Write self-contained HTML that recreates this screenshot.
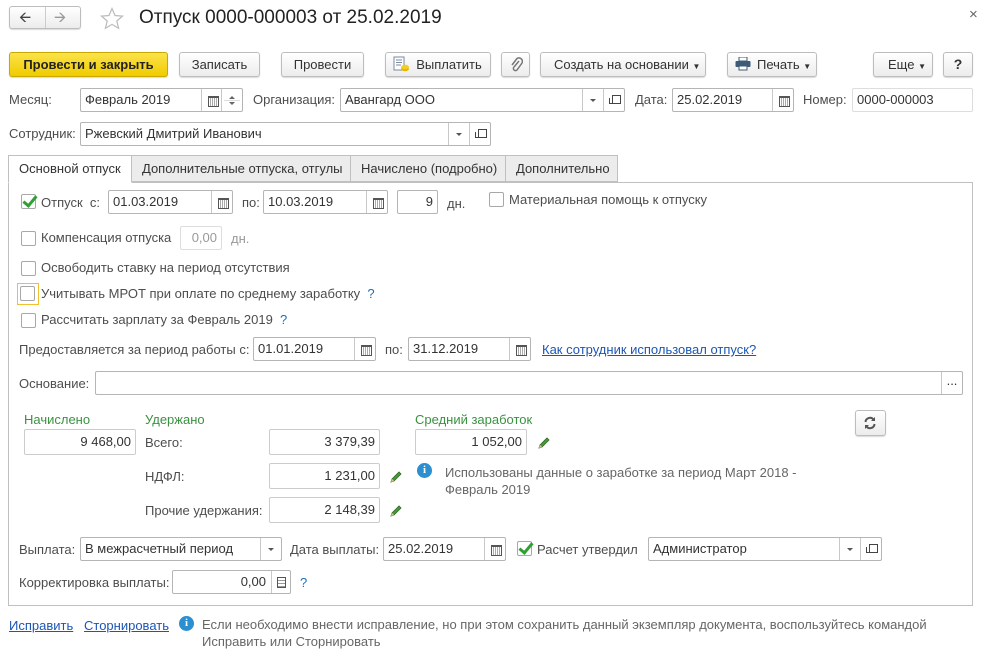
<!DOCTYPE html>
<html><head><meta charset="utf-8">
<style>
*{box-sizing:border-box;margin:0;padding:0}
body{width:982px;height:651px;background:#fff;font-family:"Liberation Sans",Arial,sans-serif;font-size:13px;color:#333;position:relative;overflow:hidden}
.a{position:absolute;white-space:nowrap}
.lbl{position:absolute;white-space:nowrap;color:#4d4d4d;line-height:16px}
.f{position:absolute;border:1px solid #b5b5b5;border-radius:2px;background:#fff;height:24px;line-height:22px;padding:0 4px;color:#333;white-space:nowrap;overflow:hidden}
.r{text-align:right}
.btn{position:absolute;height:25px;border:1px solid #bdbdbd;border-radius:3px;background:linear-gradient(#fff,#ececec);box-shadow:0 1px 1px rgba(0,0,0,.15);line-height:23px;text-align:center;color:#333;white-space:nowrap}
.sb{position:absolute;top:0;bottom:0;border-left:1px solid #c8c8c8;width:21px}
.dd:after{content:"";position:absolute;left:7px;top:10px;border:3px solid transparent;border-top:3px solid #555}
.op:before{content:"";position:absolute;left:8px;top:6px;width:7px;height:7px;border:1px solid #444}
.op:after{content:"";position:absolute;left:5px;top:9px;width:4px;height:5px;border-left:1px solid #444;border-bottom:1px solid #444}
.cal:before{content:"";position:absolute;left:6px;top:7px;width:9px;height:8px;border:1px solid #555;border-top:2px solid #555;background:repeating-linear-gradient(90deg,#fff 0 1px,#aaa 1px 2px)}
.cb{position:absolute;width:15px;height:15px;border:1px solid #a8a8a8;border-radius:2px;background:#fff}
.chk:after{content:"";position:absolute;left:4px;top:-2px;width:5px;height:11px;border-right:3px solid #2fa033;border-bottom:3px solid #2fa033;transform:rotate(40deg)}
.g{position:absolute;color:#3a9240;white-space:nowrap}
.lnk{position:absolute;color:#1c56b3;text-decoration:underline;white-space:nowrap}
.info{position:absolute;width:15px;height:15px;border-radius:50%;background:#2b8fd0;color:#fff;font-weight:bold;font-size:11px;line-height:15px;text-align:center;font-family:"Liberation Serif",serif}
.pen{position:absolute;width:14px;height:14px}
.tab{position:absolute;top:155px;height:27px;border:1px solid #c0c0c0;background:#ececec;line-height:26px;padding-left:10px;color:#333;white-space:nowrap}
</style></head><body>

<div class="btn" style="left:9px;top:6px;width:72px;height:23px;line-height:21px"></div>
<div class="a" style="left:45px;top:7px;width:1px;height:21px;background:#ccc"></div>
<div class="a" style="left:19px;top:7px;font-size:15px;color:#444">&#129128;</div>
<div class="a" style="left:54px;top:7px;font-size:15px;color:#999">&#129130;</div>
<svg class="a" style="left:100px;top:7px" width="24" height="23" viewBox="0 0 24 23"><path d="M12 1.5l3 7 7.5.6-5.7 4.9 1.8 7.3L12 17.4 5.4 21.3l1.8-7.3L1.5 9.1 9 8.5z" fill="none" stroke="#bbb" stroke-width="1.2"/></svg>
<div class="a" style="left:139px;top:7px;font-size:19px;color:#222">Отпуск 0000-000003 от 25.02.2019</div>
<div class="a" style="left:969px;top:6px;font-size:15px;color:#666">×</div>

<div class="btn" style="left:9px;top:52px;width:159px;background:linear-gradient(#fbe34a,#f0cc00);border-color:#c9a800;font-weight:bold;color:#222">Провести и закрыть</div>
<div class="btn" style="left:179px;top:52px;width:81px">Записать</div>
<div class="btn" style="left:281px;top:52px;width:83px">Провести</div>
<div class="btn" style="left:385px;top:52px;width:106px;padding-left:22px">Выплатить</div>
<svg class="a" style="left:393px;top:56px" width="16" height="17"><rect x="1" y="1" width="10" height="13" fill="#fff" stroke="#7a8aa0"/><path d="M3 4h6M3 6.5h6M3 9h5" stroke="#7a8aa0"/><ellipse cx="12" cy="13" rx="4" ry="2.2" fill="#e8b400"/><ellipse cx="12" cy="11" rx="4" ry="2.2" fill="#f5cc20"/></svg>
<div class="btn" style="left:501px;top:52px;width:29px"></div>
<svg class="a" style="left:509px;top:56px" width="14" height="17"><path d="M10 5L5 11a2 2 0 0 0 3 3l5-7a3.5 3.5 0 0 0-5-4.5L3 9" fill="none" stroke="#777" stroke-width="1.5"/></svg>
<div class="btn" style="left:540px;top:52px;width:166px;text-align:left;padding-left:13px">Создать на основании <span style="font-size:8px">▼</span></div>
<div class="btn" style="left:727px;top:52px;width:90px;text-align:left;padding-left:29px">Печать <span style="font-size:8px">▼</span></div>
<svg class="a" style="left:735px;top:57px" width="16" height="14"><rect x="4" y="0" width="8" height="4" fill="#fff" stroke="#3d5a78"/><rect x="0.5" y="4" width="15" height="6" rx="1" fill="#3d5a78"/><rect x="4" y="9" width="8" height="4" fill="#fff" stroke="#3d5a78"/></svg>
<div class="btn" style="left:873px;top:52px;width:60px;text-align:left;padding-left:14px">Еще <span style="font-size:8px">▼</span></div>
<div class="btn" style="left:943px;top:52px;width:30px;font-weight:bold;font-size:14px">?</div>

<div class="lbl" style="left:9px;top:92px">Месяц:</div>
<div class="f" style="left:80px;top:88px;width:163px">Февраль 2019<div class="sb cal" style="right:20px"></div><div class="sb" style="right:0;width:21px"><div style="position:absolute;left:7px;top:4px;border:3px solid transparent;border-bottom:3px solid #666"></div><div style="position:absolute;left:2px;right:2px;top:11px;border-top:1px solid #ddd"></div><div style="position:absolute;left:7px;top:13px;border:3px solid transparent;border-top:3px solid #666"></div></div></div>
<div class="lbl" style="left:253px;top:92px">Организация:</div>
<div class="f" style="left:340px;top:88px;width:285px">Авангард ООО<div class="sb dd" style="right:21px"></div><div class="sb op" style="right:0"></div></div>
<div class="lbl" style="left:635px;top:92px">Дата:</div>
<div class="f" style="left:672px;top:88px;width:122px">25.02.2019<div class="sb cal" style="right:0"></div></div>
<div class="lbl" style="left:803px;top:92px">Номер:</div>
<div class="f" style="left:852px;top:88px;width:121px;border-color:#ddd">0000-000003</div>

<div class="lbl" style="left:9px;top:126px">Сотрудник:</div>
<div class="f" style="left:80px;top:122px;width:411px">Ржевский Дмитрий Иванович<div class="sb dd" style="right:21px"></div><div class="sb op" style="right:0"></div></div>

<div class="a" style="left:8px;top:182px;width:965px;height:424px;border:1px solid #c0c0c0"></div>
<div class="tab" style="left:131px;width:220px">Дополнительные отпуска, отгулы</div>
<div class="tab" style="left:350px;width:156px">Начислено (подробно)</div>
<div class="tab" style="left:505px;width:113px">Дополнительно</div>
<div class="tab" style="left:8px;width:124px;background:#fff;border-bottom:1px solid #fff;height:28px">Основной отпуск</div>

<div class="cb chk" style="left:21px;top:194px"></div>
<div class="lbl" style="left:41px;top:195px">Отпуск&nbsp; с:</div>
<div class="f" style="left:108px;top:190px;width:125px">01.03.2019<div class="sb cal" style="right:0"></div></div>
<div class="lbl" style="left:242px;top:195px">по:</div>
<div class="f" style="left:263px;top:190px;width:125px">10.03.2019<div class="sb cal" style="right:0"></div></div>
<div class="f r" style="left:397px;top:190px;width:41px">9</div>
<div class="lbl" style="left:447px;top:196px">дн.</div>
<div class="cb" style="left:489px;top:192px"></div>
<div class="lbl" style="left:509px;top:192px">Материальная помощь к отпуску</div>

<div class="cb" style="left:21px;top:231px"></div>
<div class="lbl" style="left:41px;top:230px">Компенсация отпуска</div>
<div class="f r" style="left:180px;top:226px;width:42px;border-color:#ddd;color:#999">0,00</div>
<div class="lbl" style="left:231px;top:231px;color:#999">дн.</div>

<div class="cb" style="left:21px;top:261px"></div>
<div class="lbl" style="left:41px;top:260px">Освободить ставку на период отсутствия</div>
<div class="a" style="left:17px;top:283px;width:22px;height:22px;border:1px solid #f0c030"></div>
<div class="cb" style="left:20px;top:286px"></div>
<div class="lbl" style="left:41px;top:286px">Учитывать МРОТ при оплате по среднему заработку <span style="color:#1e6fb8">&nbsp;?</span></div>
<div class="cb" style="left:21px;top:313px"></div>
<div class="lbl" style="left:41px;top:312px">Рассчитать зарплату за Февраль 2019 <span style="color:#1e6fb8">&nbsp;?</span></div>

<div class="lbl" style="left:19px;top:342px">Предоставляется за период работы с:</div>
<div class="f" style="left:253px;top:337px;width:123px">01.01.2019<div class="sb cal" style="right:0"></div></div>
<div class="lbl" style="left:385px;top:342px">по:</div>
<div class="f" style="left:408px;top:337px;width:123px">31.12.2019<div class="sb cal" style="right:0"></div></div>
<div class="lnk" style="left:542px;top:342px">Как сотрудник использовал отпуск?</div>

<div class="lbl" style="left:19px;top:376px">Основание:</div>
<div class="f" style="left:95px;top:371px;width:868px"><div class="sb" style="right:0;text-align:center;line-height:18px">...</div></div>

<div class="g" style="left:24px;top:412px">Начислено</div>
<div class="f r" style="left:24px;top:429px;width:112px;height:26px;line-height:24px;border-color:#ccc">9 468,00</div>
<div class="g" style="left:145px;top:412px">Удержано</div>
<div class="lbl" style="left:145px;top:435px">Всего:</div>
<div class="f r" style="left:269px;top:429px;width:111px;height:26px;line-height:24px;border-color:#ccc">3 379,39</div>
<div class="lbl" style="left:145px;top:469px">НДФЛ:</div>
<div class="f r" style="left:269px;top:463px;width:111px;height:26px;line-height:24px;border-color:#ccc">1 231,00</div>
<div class="lbl" style="left:145px;top:503px">Прочие удержания:</div>
<div class="f r" style="left:269px;top:497px;width:111px;height:26px;line-height:24px;border-color:#ccc">2 148,39</div>
<div class="g" style="left:415px;top:412px">Средний заработок</div>
<div class="f r" style="left:415px;top:429px;width:112px;height:26px;line-height:24px;border-color:#ccc">1 052,00</div>
<svg class="pen" style="left:537px;top:436px" viewBox="0 0 14 14"><path d="M2 12l1-3 7-7 2 2-7 7z" fill="#4a9a3a" stroke="#2c6a22" stroke-width=".8"/><path d="M2 12l1-3 2 2z" fill="#e8c890"/></svg>
<svg class="pen" style="left:389px;top:470px" viewBox="0 0 14 14"><path d="M2 12l1-3 7-7 2 2-7 7z" fill="#4a9a3a" stroke="#2c6a22" stroke-width=".8"/><path d="M2 12l1-3 2 2z" fill="#e8c890"/></svg>
<svg class="pen" style="left:389px;top:504px" viewBox="0 0 14 14"><path d="M2 12l1-3 7-7 2 2-7 7z" fill="#4a9a3a" stroke="#2c6a22" stroke-width=".8"/><path d="M2 12l1-3 2 2z" fill="#e8c890"/></svg>
<div class="info" style="left:417px;top:463px">i</div>
<div class="lbl" style="left:445px;top:464px;color:#666;line-height:17px">Использованы данные о заработке за период Март 2018 -<br>Февраль 2019</div>
<div class="btn" style="left:855px;top:410px;width:31px;height:26px"></div>
<svg class="a" style="left:863px;top:416px" width="14" height="14" viewBox="0 0 14 14"><path d="M2.5 6A4.5 4.5 0 0 1 10.5 3.5M11.5 8A4.5 4.5 0 0 1 3.5 10.5" fill="none" stroke="#555" stroke-width="2"/><path d="M12 1v4H8z M2 13V9h4z" fill="#555"/></svg>

<div class="lbl" style="left:19px;top:542px">Выплата:</div>
<div class="f" style="left:80px;top:537px;width:202px">В межрасчетный период<div class="sb dd" style="right:0"></div></div>
<div class="lbl" style="left:290px;top:542px">Дата выплаты:</div>
<div class="f" style="left:383px;top:537px;width:123px">25.02.2019<div class="sb cal" style="right:0"></div></div>
<div class="cb chk" style="left:517px;top:541px"></div>
<div class="lbl" style="left:537px;top:542px">Расчет утвердил</div>
<div class="f" style="left:648px;top:537px;width:234px">Администратор<div class="sb dd" style="right:21px"></div><div class="sb op" style="right:0"></div></div>

<div class="lbl" style="left:19px;top:575px">Корректировка выплаты:</div>
<div class="f r" style="left:172px;top:570px;width:119px;padding-right:24px">0,00<div class="sb" style="right:0;width:19px"><div style="position:absolute;left:5px;top:6px;width:9px;height:11px;border:1px solid #555;background:repeating-linear-gradient(#fff 0 2px,#999 2px 3px)"></div></div></div>
<div class="lbl" style="left:300px;top:575px;color:#1e6fb8">?</div>

<div class="lnk" style="left:9px;top:618px">Исправить</div>
<div class="lnk" style="left:84px;top:618px">Сторнировать</div>
<div class="info" style="left:179px;top:616px">i</div>
<div class="lbl" style="left:202px;top:616px;color:#666;line-height:17px">Если необходимо внести исправление, но при этом сохранить данный экземпляр документа, воспользуйтесь командой<br>Исправить или Сторнировать</div>
</body></html>
